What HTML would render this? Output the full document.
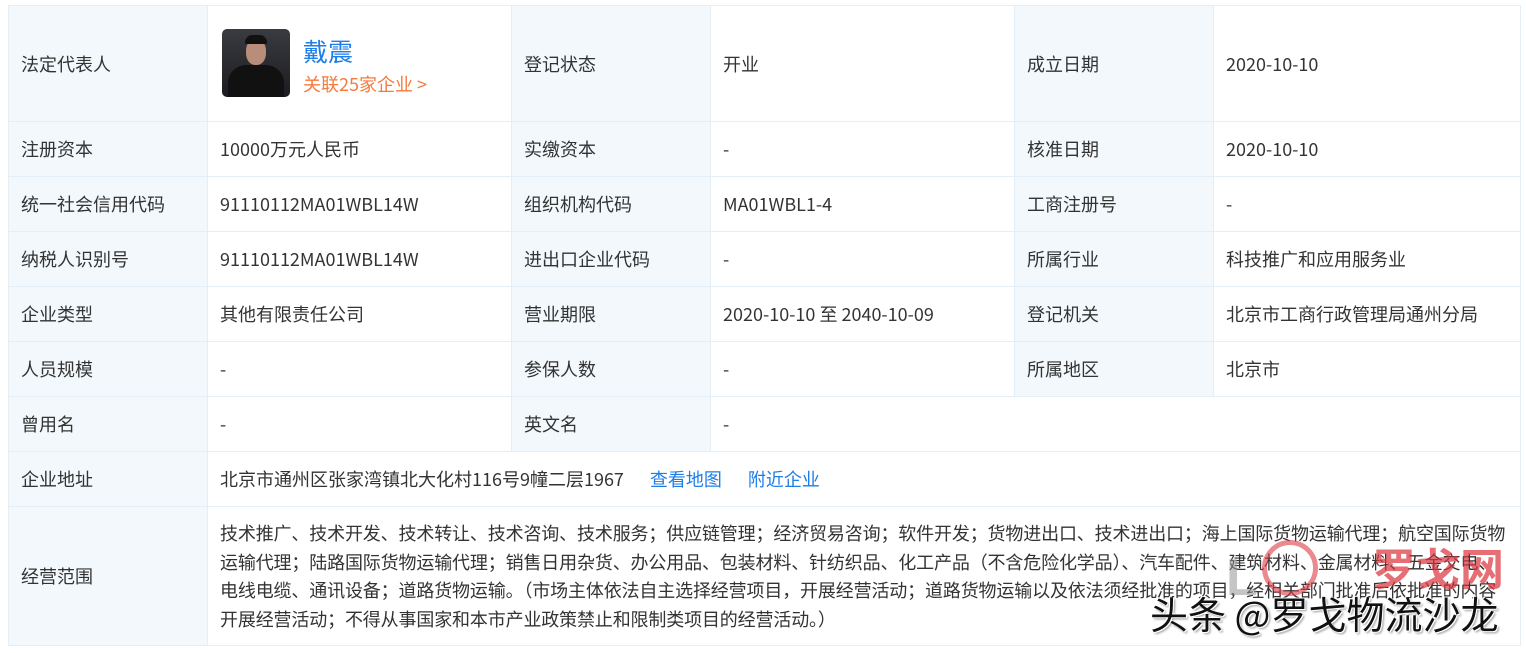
<!DOCTYPE html>
<html><head><meta charset="utf-8"><style>
body{margin:0;background:#fff;width:1526px;height:653px;overflow:hidden;position:relative;font-family:"Noto Sans CJK SC","Liberation Sans",sans-serif;font-size:18px;color:#333}
table{position:absolute;left:8px;top:5px;border-collapse:collapse;table-layout:fixed;width:1512px}
td{border:1px solid #e4eef6;padding:0 12px;vertical-align:middle;white-space:nowrap;line-height:24px}
td.l{background:#f2f8fc}
tr{height:55px}
.blue{color:#1e7ee8;margin-left:26px}
.sc{white-space:nowrap;line-height:28.5px;padding:6px 2px 6px 12px;letter-spacing:-0.15px;overflow:hidden}
</style></head><body>
<table>
<colgroup><col style="width:199px"><col style="width:304px"><col style="width:199px"><col style="width:304px"><col style="width:199px"><col style="width:307px"></colgroup>
<tr style="height:116px"><td class="l">法定代表人</td><td style="position:relative">
<div style="position:absolute;left:14px;top:23px;width:68px;height:68px;border-radius:5px;background:linear-gradient(#3a3b40,#1c1c20);overflow:hidden">
<div style="position:absolute;left:24px;top:10px;width:20px;height:26px;border-radius:45%;background:#b88e7a"></div>
<div style="position:absolute;left:23px;top:6px;width:22px;height:9px;border-radius:10px 10px 2px 2px;background:#111"></div>
<div style="position:absolute;left:6px;top:36px;width:56px;height:40px;border-radius:18px 18px 0 0;background:#111"></div>
</div>
<div style="position:absolute;left:95px;top:28px;font-size:25px;color:#1e7ee8;line-height:34px">戴震</div>
<div style="position:absolute;left:95px;top:66px;font-size:18px;color:#f57a3b">关联25家企业 &gt;</div>
</td><td class="l">登记状态</td><td>开业</td><td class="l">成立日期</td><td>2020-10-10</td></tr>
<tr><td class="l">注册资本</td><td>10000万元人民币</td><td class="l">实缴资本</td><td>-</td><td class="l">核准日期</td><td>2020-10-10</td></tr>
<tr><td class="l">统一社会信用代码</td><td>91110112MA01WBL14W</td><td class="l">组织机构代码</td><td>MA01WBL1-4</td><td class="l">工商注册号</td><td>-</td></tr>
<tr><td class="l">纳税人识别号</td><td>91110112MA01WBL14W</td><td class="l">进出口企业代码</td><td>-</td><td class="l">所属行业</td><td>科技推广和应用服务业</td></tr>
<tr><td class="l">企业类型</td><td>其他有限责任公司</td><td class="l">营业期限</td><td>2020-10-10 至 2040-10-09</td><td class="l">登记机关</td><td>北京市工商行政管理局通州分局</td></tr>
<tr><td class="l">人员规模</td><td>-</td><td class="l">参保人数</td><td>-</td><td class="l">所属地区</td><td>北京市</td></tr>
<tr><td class="l">曾用名</td><td>-</td><td class="l">英文名</td><td colspan="3">-</td></tr>
<tr><td class="l">企业地址</td><td colspan="5">北京市通州区张家湾镇北大化村116号9幢二层1967<span class="blue">查看地图</span><span class="blue">附近企业</span></td></tr>
<tr style="height:139px"><td class="l">经营范围</td><td colspan="5" class="sc">技术推广、技术开发、技术转让、技术咨询、技术服务；供应链管理；经济贸易咨询；软件开发；货物进出口、技术进出口；海上国际货物运输代理；航空国际货物<br>运输代理；陆路国际货物运输代理；销售日用杂货、办公用品、包装材料、针纺织品、化工产品（不含危险化学品）、汽车配件、建筑材料、金属材料、五金交电、<br>电线电缆、通讯设备；道路货物运输。（市场主体依法自主选择经营项目，开展经营活动；道路货物运输以及依法须经批准的项目，经相关部门批准后依批准的内容<br>开展经营活动；不得从事国家和本市产业政策禁止和限制类项目的经营活动。）</td></tr>
</table>
<div style="position:absolute;left:1226px;top:548px;font-size:52px;line-height:60px;color:rgba(150,150,150,.55);font-weight:bold;font-family:'Liberation Sans',sans-serif">L</div>
<div style="position:absolute;left:1262px;top:540px;width:56px;height:56px;border-radius:50%;border:5px solid rgba(220,60,70,.6);box-sizing:border-box"></div>
<div style="position:absolute;left:1372px;top:536px;font-size:44px;line-height:60px;font-weight:bold;color:rgba(220,50,60,.7)">罗戈网</div>
<div style="position:absolute;left:1150px;top:588px;font-size:38px;line-height:50px;color:#111;white-space:nowrap;text-shadow:1px 1px 0 #fff,-1px -1px 0 #fff,2px 2px 2px rgba(0,0,0,.4)">头条 @罗戈物流沙龙</div>
</body></html>
